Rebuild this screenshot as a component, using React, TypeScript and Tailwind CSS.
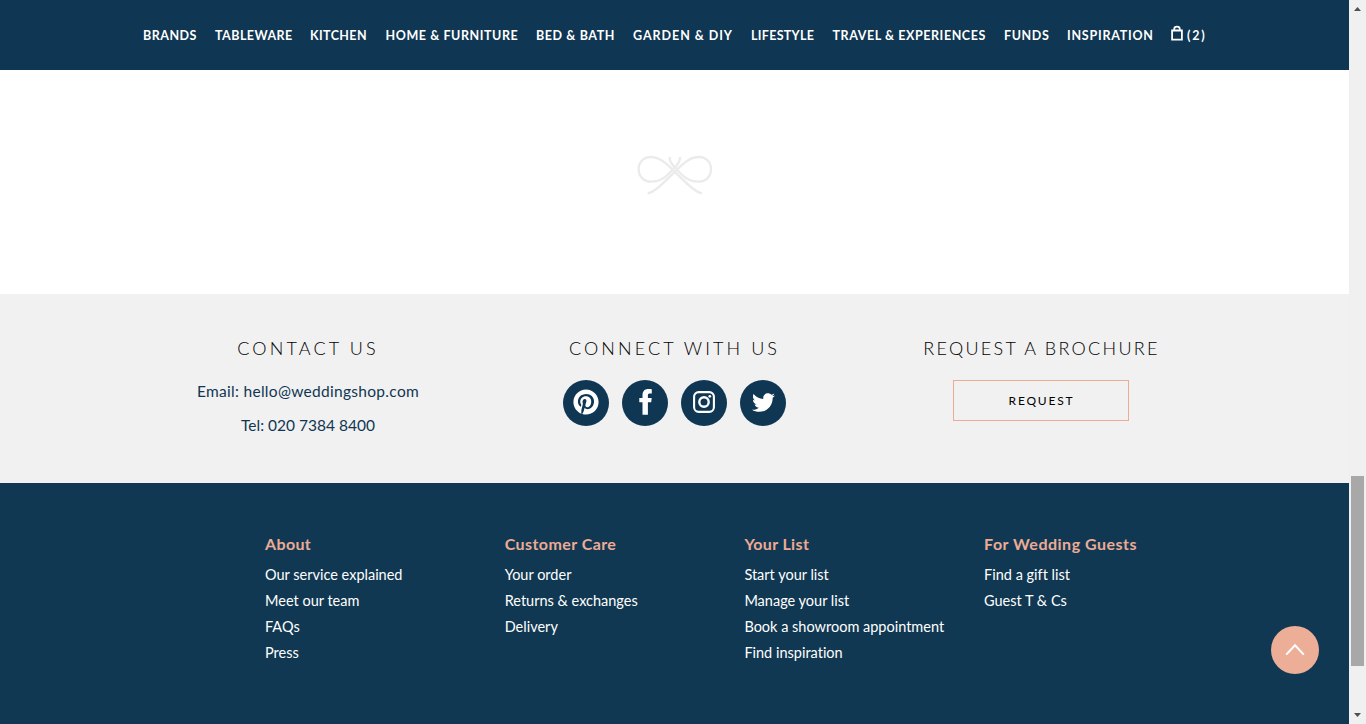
import type { ReactNode } from 'react'
import { FaPinterest, FaTwitter } from 'react-icons/fa'

const nav = [
  { label: 'BRANDS', cls: 'w-[72px] tracking-[0.5px]' },
  { label: 'TABLEWARE', cls: 'w-[95px] tracking-[0.45px]' },
  { label: 'KITCHEN', cls: 'w-[75.5px] tracking-[0.4px]' },
  { label: 'HOME & FURNITURE', cls: 'w-[150.5px] tracking-[0.58px]' },
  { label: 'BED & BATH', cls: 'w-[97px] tracking-[0.6px]' },
  { label: 'GARDEN & DIY', cls: 'w-[118px] tracking-[0.95px]' },
  { label: 'LIFESTYLE', cls: 'w-[81.5px] tracking-[0.3px]' },
  { label: 'TRAVEL & EXPERIENCES', cls: 'w-[171.5px] tracking-[0.57px]' },
  { label: 'FUNDS', cls: 'w-[63px] tracking-[0.6px]' },
  { label: 'INSPIRATION', cls: 'w-[103px] tracking-[0.75px]' },
]

const columns = [
  { title: 'About', cls: 'tracking-[0.35px]', links: ['Our service explained', 'Meet our team', 'FAQs', 'Press'] },
  { title: 'Customer Care', cls: 'tracking-[0.43px]', links: ['Your order', 'Returns & exchanges', 'Delivery'] },
  { title: 'Your List', cls: 'tracking-[0.35px]', links: ['Start your list', 'Manage your list', 'Book a showroom appointment', 'Find inspiration'] },
  { title: 'For Wedding Guests', cls: 'tracking-[0.5px]', links: ['Find a gift list', 'Guest T & Cs'] },
]

function Bag() {
  return (
    <svg className="mt-[25px] h-4 w-3 shrink-0" viewBox="0 0 12 16" fill="none" stroke="#fff">
      <path d="M1.1 5.5H10.9V14.6H1.1Z" strokeWidth="1.8" />
      <path d="M3.2 5V4C3.2 .8 8.8 .8 8.8 4V5" strokeWidth="1.7" />
    </svg>
  )
}

function Bow() {
  const strand = 'M231 145C212 142 186 117 149 80C119 49 101 36 78 36C55 36 41 52 41 73C41 94 56 110 79 110C107 110 124 96 145 71C158 60 166 50 165 36'
  return (
    <svg className="h-[60px] w-[100px]" viewBox="0 0 300 180" fill="none" stroke="#ebebeb" strokeWidth="7">
      <path d={strand} />
      <path d={strand} transform="translate(299 0) scale(-1 1)" />
    </svg>
  )
}

function Facebook() {
  return (
    <svg className="h-[26px] w-[13px]" viewBox="0 0 13 26" fill="currentColor">
      <path d="M12.8 .3V4.5H10.6C9.2 4.5 8.9 5.3 8.9 6.5V9.1H12.7L12.2 13.3H8.9V25.8H3.5V13.3H.3V9.1H3.5V6.1C3.5 2.2 5.8 .1 9.4 .1C11.2 .1 12.4 .2 12.8 .3Z" />
    </svg>
  )
}

function Instagram() {
  return (
    <svg className="size-[22px]" viewBox="0 0 22 22" fill="none" stroke="currentColor">
      <rect x="1.1" y="1.1" width="19.8" height="19.8" rx="4.6" strokeWidth="2.1" />
      <circle cx="11" cy="11" r="4.7" strokeWidth="2.4" />
      <circle cx="16.8" cy="5.3" r="1.4" fill="currentColor" stroke="none" />
    </svg>
  )
}

function Social({ label, children }: { label: string; children: ReactNode }) {
  return (
    <a href="#" aria-label={label} className="flex size-[46px] items-center justify-center rounded-full bg-[#0f3652] pb-[2px] text-white">
      {children}
    </a>
  )
}

export default function App() {
  return (
    <div className="flex h-[724px] w-[1366px] overflow-hidden bg-white font-['Lato',sans-serif] [font-variant-ligatures:none]">
      <div className="relative flex w-[1349px] flex-col">
        <nav className="flex h-[70px] shrink-0 bg-[#0f3652] pl-[143px] text-[12.5px] leading-[71px] font-bold whitespace-nowrap text-white">
          {nav.map((n) => (
            <a key={n.label} href="#" className={`shrink-0 ${n.cls}`}>{n.label}</a>
          ))}
          <a href="#" className="flex pl-[1px] tracking-[1.8px]">
            <Bag />
            <span className="ml-1">(2)</span>
          </a>
        </nav>

        <div className="flex h-[224px] shrink-0 justify-center pt-[75px]">
          <Bow />
        </div>

        <section className="flex h-[189px] shrink-0 bg-[#f1f1f1] pl-[125px] text-center whitespace-nowrap">
          <div className="w-[366px] pt-[42px] text-[15.5px] leading-[34px] text-[#0f3652]">
            <h2 className="mb-[14px] text-[18px] leading-6 font-light tracking-[3.15px] text-black">CONTACT US</h2>
            <p className="tracking-[0.3px]">Email: hello@weddingshop.com</p>
            <p>Tel: 020 7384 8400</p>
          </div>
          <div className="w-[367px] pt-[42px]">
            <h2 className="text-[18px] leading-6 font-light tracking-[3.1px] text-black">CONNECT WITH US</h2>
            <div className="mt-[20px] flex justify-center gap-[13px]">
              <Social label="Pinterest"><FaPinterest size={26} /></Social>
              <Social label="Facebook"><Facebook /></Social>
              <Social label="Instagram"><Instagram /></Social>
              <Social label="Twitter"><FaTwitter size={23} /></Social>
            </div>
          </div>
          <div className="w-[366px] pt-[42px]">
            <h2 className="pl-[1px] text-[18px] leading-6 font-light tracking-[2.27px] text-black">REQUEST A BROCHURE</h2>
            <a href="#" className="mx-auto mt-[20px] block h-[41px] w-[176px] border border-[#edab95] pl-[1px] text-[12px] leading-[40px] tracking-[1.8px] text-black">REQUEST</a>
          </div>
        </section>

        <footer className="flex grow bg-[#113852] pt-[49px] pl-[265px] whitespace-nowrap text-white">
          {columns.map((c) => (
            <div key={c.title} className="w-[239.7px]">
              <h3 className={`text-[16px] leading-6 font-bold text-[#edab95] ${c.cls}`}>{c.title}</h3>
              <ul className="mt-[6px] text-[14.5px] leading-[26px]">
                {c.links.map((l) => (
                  <li key={l}><a href="#">{l}</a></li>
                ))}
              </ul>
            </div>
          ))}
        </footer>

        <a href="#" aria-label="Back to top" className="absolute top-[626px] right-[30px] flex size-12 items-center justify-center rounded-full bg-[#edae98]">
          <svg className="size-6" viewBox="0 0 24 24" fill="none" stroke="#fff" strokeWidth="2">
            <path d="M3.2 16.6L12 7.3L20.8 16.6" />
          </svg>
        </a>
      </div>

      <div className="flex w-[17px] flex-col items-center bg-[#f0f0f0]">
        <svg className="h-[17px] w-[17px]" viewBox="0 0 17 17" fill="#505050"><path d="M5 11L8.5 7L12 11Z" /></svg>
        <div className="mt-[459px] mr-[1px] ml-auto h-[190px] w-[14px] border-r border-[#f0f0f0] bg-[#a8a8a8]" />
        <svg className="mt-auto h-[17px] w-[17px]" viewBox="0 0 17 17" fill="#505050"><path d="M5 6L8.5 10L12 6Z" /></svg>
      </div>
    </div>
  )
}
